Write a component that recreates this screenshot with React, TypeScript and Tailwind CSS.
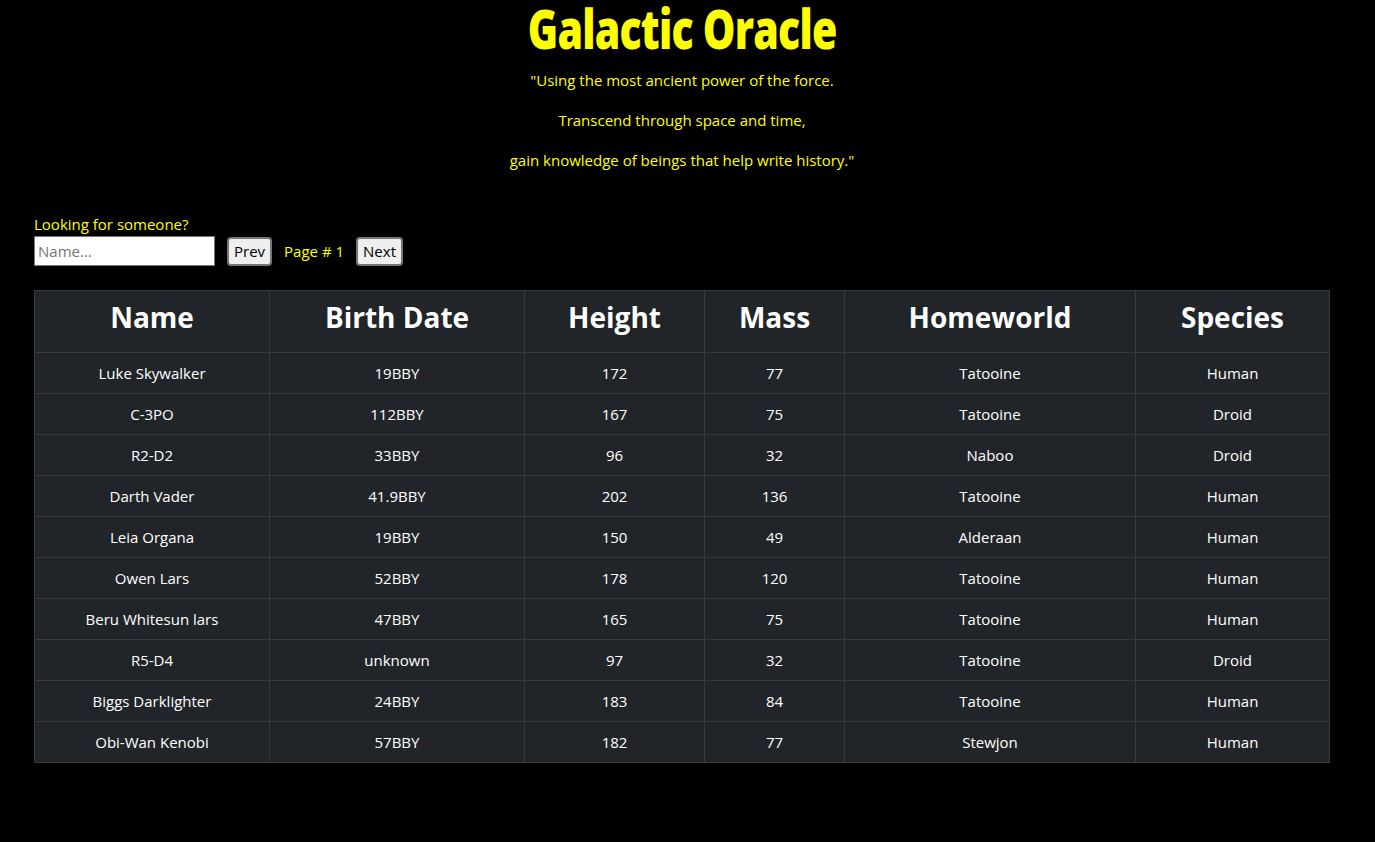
import React, { useState } from "react";

type Person = {
  name: string;
  birth: string;
  height: string;
  mass: string;
  world: string;
  species: string;
};

const PEOPLE: Person[] = [
  { name: "Luke Skywalker", birth: "19BBY", height: "172", mass: "77", world: "Tatooine", species: "Human" },
  { name: "C-3PO", birth: "112BBY", height: "167", mass: "75", world: "Tatooine", species: "Droid" },
  { name: "R2-D2", birth: "33BBY", height: "96", mass: "32", world: "Naboo", species: "Droid" },
  { name: "Darth Vader", birth: "41.9BBY", height: "202", mass: "136", world: "Tatooine", species: "Human" },
  { name: "Leia Organa", birth: "19BBY", height: "150", mass: "49", world: "Alderaan", species: "Human" },
  { name: "Owen Lars", birth: "52BBY", height: "178", mass: "120", world: "Tatooine", species: "Human" },
  { name: "Beru Whitesun lars", birth: "47BBY", height: "165", mass: "75", world: "Tatooine", species: "Human" },
  { name: "R5-D4", birth: "unknown", height: "97", mass: "32", world: "Tatooine", species: "Droid" },
  { name: "Biggs Darklighter", birth: "24BBY", height: "183", mass: "84", world: "Tatooine", species: "Human" },
  { name: "Obi-Wan Kenobi", birth: "57BBY", height: "182", mass: "77", world: "Stewjon", species: "Human" },
];

const HEADERS = ["Name", "Birth Date", "Height", "Mass", "Homeworld", "Species"];

export default function App() {
  const [query, setQuery] = useState("");
  const [page] = useState(1);

  return (
    <div className="min-h-[842px] bg-black font-['Segoe_UI','Open_Sans','Noto_Sans',sans-serif] text-base leading-6">
      {/* Header */}
      <header className="text-center text-[#ffff00] pr-[11px]">
        <h1 className="pt-[0px] pb-[12px] text-[54px] leading-[56px] font-extrabold tracking-[-1px] font-['Impact','Open_Sans',sans-serif]">
          <span className="inline-block scale-x-[0.76]">Galactic Oracle</span>
        </h1>
        <p className="mb-4 text-[15px]">"Using the most ancient power of the force.</p>
        <p className="mb-4 text-[15px]">Transcend through space and time,</p>
        <p className="mb-4 text-[15px]">gain knowledge of beings that help write history."</p>
      </header>

      {/* Search + pagination */}
      <div className="mt-[40px] px-[34px] text-[#ffff00] text-[15px]">
        <label htmlFor="search" className="block leading-[24px]">Looking for someone?</label>
        <div className="flex items-center">
          <input
            id="search"
            value={query}
            onChange={(e) => setQuery(e.target.value)}
            placeholder="Name..."
            className="w-[181px] h-[30px] bg-white text-black px-[3px] text-[15px] border border-[#767676] placeholder:text-[#757575] outline-none"
          />
          <button className="ml-[12px] h-[29px] px-[5px] rounded-[4px] bg-[#efefef] border-2 border-[#767676] text-black text-[15px] leading-none">
            Prev
          </button>
          <span className="ml-[12px] mr-[12px]">Page # {page}</span>
          <button className="h-[29px] px-[5px] rounded-[4px] bg-[#efefef] border-2 border-[#767676] text-black text-[15px] leading-none">
            Next
          </button>
        </div>
      </div>

      {/* Results table */}
      <div className="px-[34px] pt-[24px] pr-[46px]">
        <table className="w-full table-fixed border-collapse border border-[#373b3e] bg-[#212529] text-white text-center">
          <colgroup>
            <col className="w-[235px]" />
            <col className="w-[255px]" />
            <col className="w-[180px]" />
            <col className="w-[140px]" />
            <col className="w-[291px]" />
            <col className="w-[194px]" />
          </colgroup>
          <thead>
            <tr>
              {HEADERS.map((h) => (
                <th key={h} className="border border-[#373b3e] px-2 py-2">
                  <h2 className="mb-2 text-[28px] leading-[37px] font-bold">{h}</h2>
                </th>
              ))}
            </tr>
          </thead>
          <tbody>
            {PEOPLE.map((p) => (
              <tr key={p.name}>
                {[p.name, p.birth, p.height, p.mass, p.world, p.species].map((v, i) => (
                  <td key={i} className="border border-[#373b3e] px-2 py-2 text-[15px] leading-6">
                    {v}
                  </td>
                ))}
              </tr>
            ))}
          </tbody>
        </table>
      </div>
    </div>
  );
}
